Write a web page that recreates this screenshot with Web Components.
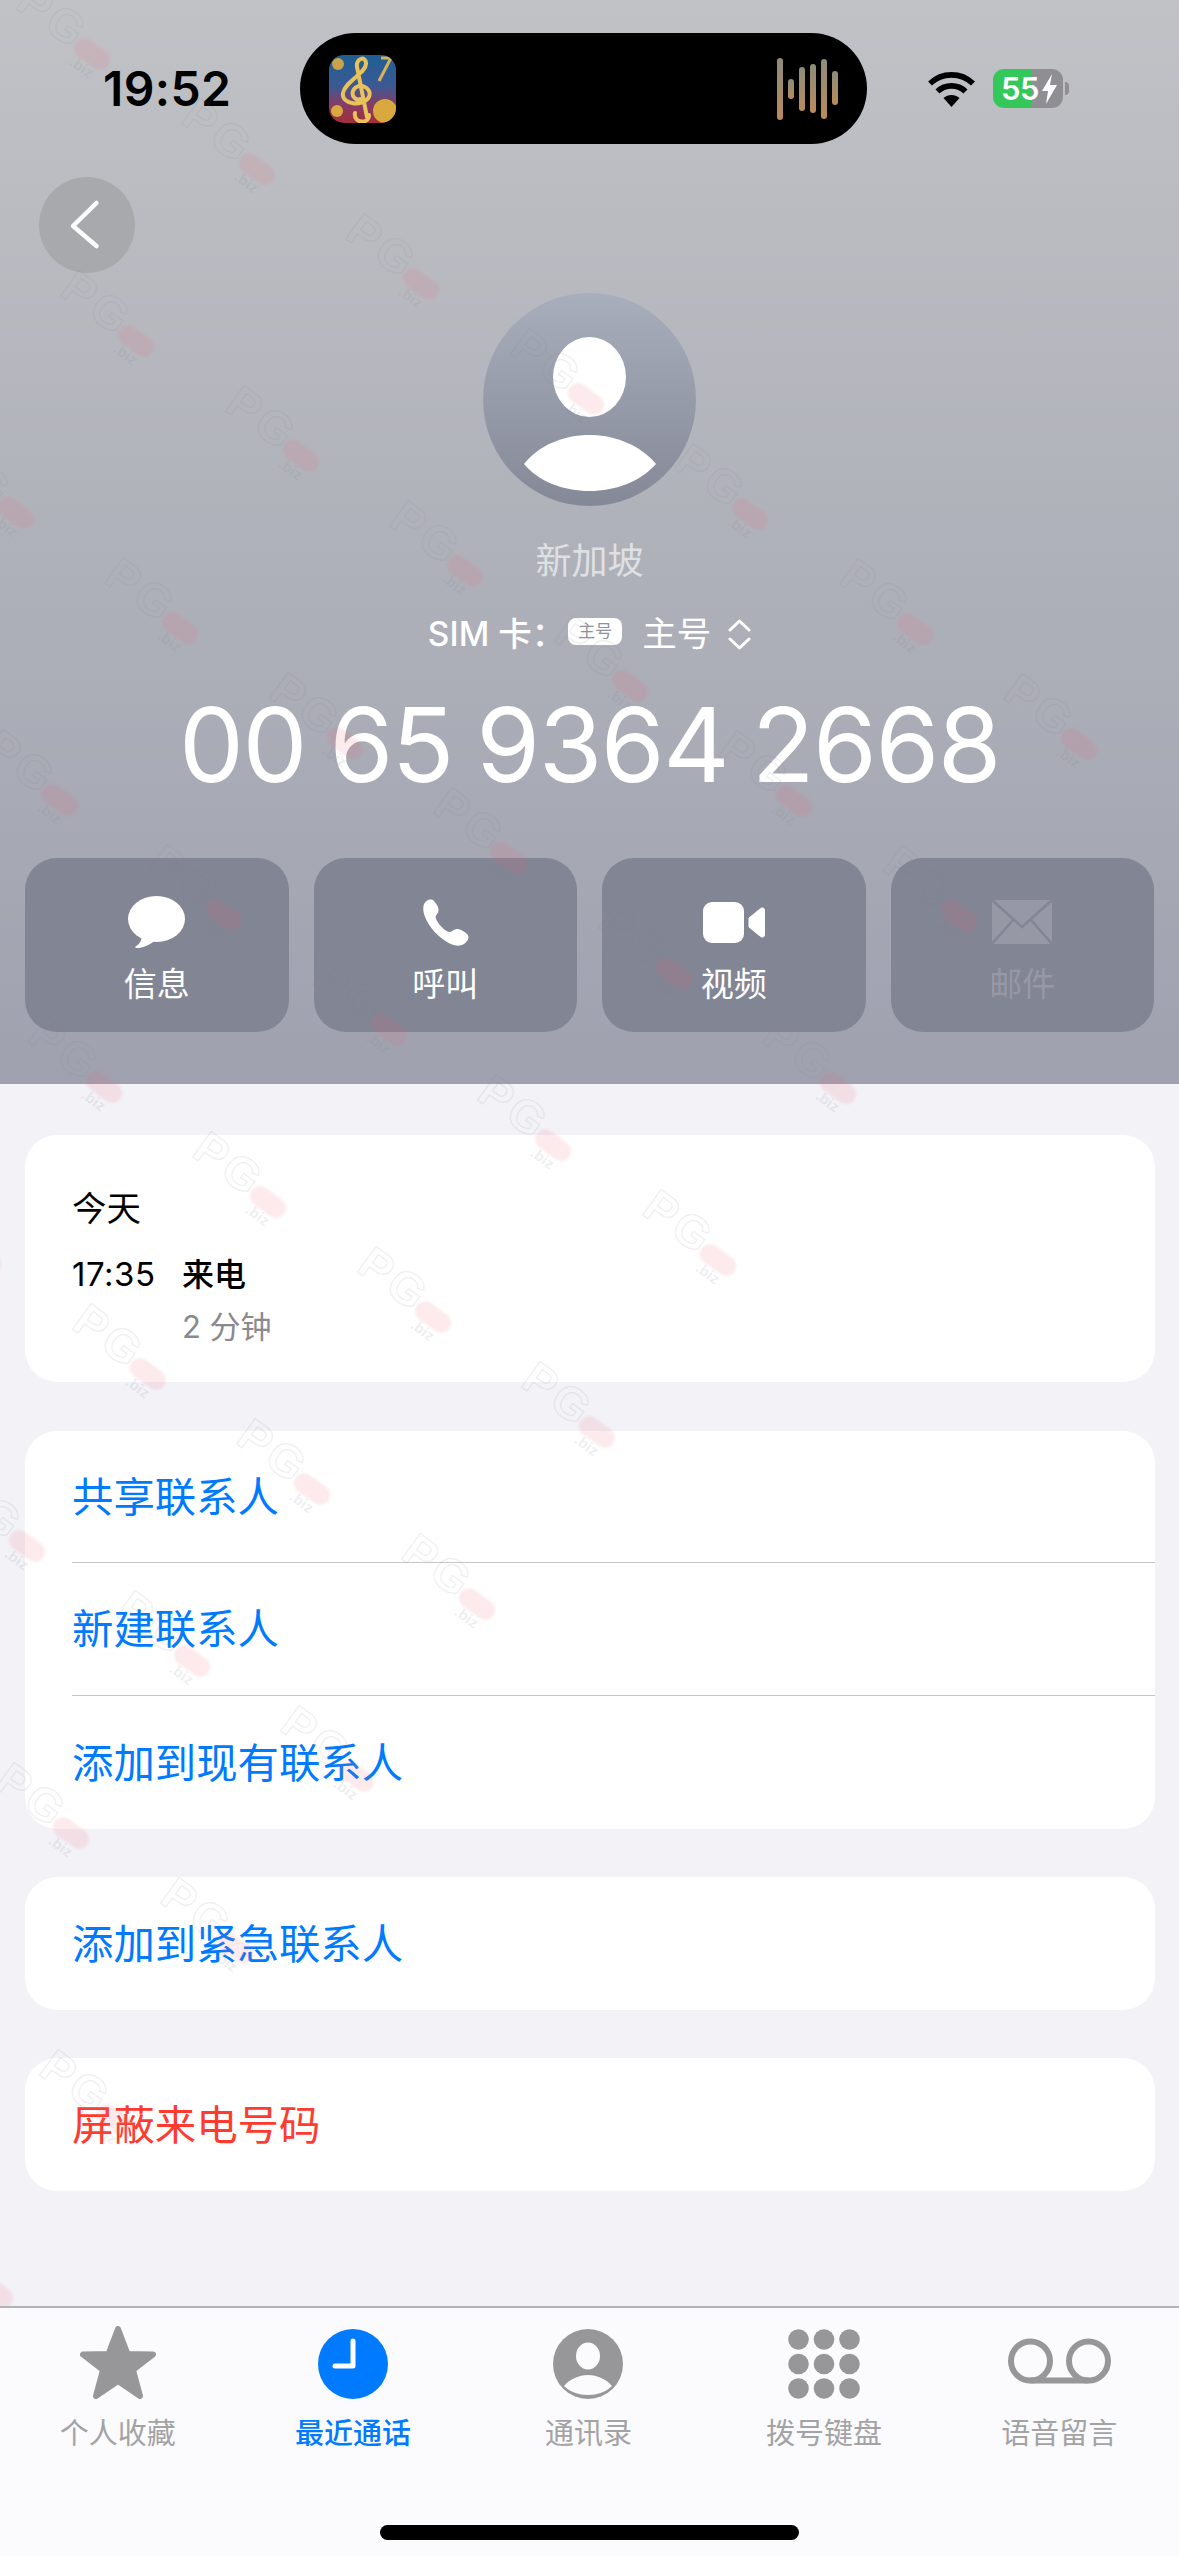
<!DOCTYPE html>
<html lang="zh">
<head>
<meta charset="utf-8">
<title>新加坡</title>
<style>
	html, body { margin: 0; padding: 0; background: #f2f2f7; }
	body { font-family: Inter, "Noto Sans CJK SC", sans-serif; }
</style>
</head>
<body>
<call-page></call-page>
<script>
const CJK = 'Inter, "Noto Sans CJK SC", sans-serif';

// Status bar with dynamic island
class StatusBar extends HTMLElement {
	constructor() {
		super();
		this.attachShadow({ mode: 'open' });
		this.shadowRoot.innerHTML = `
			<style>
				:host { display: grid; grid-template-columns: 300px 567px 1fr; height: 111px; padding-top: 33px; align-items: center; }
				.time { padding-left: 103px; font: 600 48px/1 Inter, sans-serif; letter-spacing: .4px; color: #000; }
				.island { height: 111px; border-radius: 56px; background: #000; display: flex; align-items: center; justify-content: space-between; padding: 0 29px; box-sizing: border-box; }
				.right { display: flex; align-items: center; padding-left: 60px; gap: 17px; }
				.batt { position: relative; width: 70px; height: 39px; border-radius: 11px; overflow: hidden; background: linear-gradient(90deg, #34c759 0 39px, #8e8e93 39px); color: #fff; font: 600 31px/39px Inter, sans-serif; letter-spacing: -.5px; display: flex; padding-left: 8px; box-sizing: border-box; }
				.batt svg { margin-left: 3px; align-self: center; }
				.nub { width: 4px; height: 13px; margin-left: -15px; border-radius: 0 4px 4px 0; background: #8e8e93; }
				svg { display: block; }
			</style>
			<div class="time">19:52</div>
			<div class="island">
				<svg width="67" height="68" viewBox="0 0 67 68">
					<defs>
						<linearGradient id="ic" x1="0" y1="0" x2="0" y2="1">
							<stop offset="0" stop-color="#1f5f93"/><stop offset=".45" stop-color="#3a5a94"/><stop offset=".75" stop-color="#8a3a62"/><stop offset="1" stop-color="#a12f3a"/>
						</linearGradient>
						<clipPath id="icc"><rect width="67" height="68" rx="15"/></clipPath>
					</defs>
					<g clip-path="url(#icc)">
						<rect width="67" height="68" fill="url(#ic)"/>
						<circle cx="56" cy="56" r="12" fill="#d7a93f"/>
						<circle cx="8" cy="56" r="6" fill="#d7a93f"/>
						<circle cx="9" cy="9" r="6" fill="#c9a24a"/>
						<path d="M52 3 L62 3 L50 26" fill="none" stroke="#d7b25a" stroke-width="3"/>
						<path d="M40 60 C40 70 24 68 26 58 M38 62 L28 12 C27 4 36 0 37 8 C38 18 16 26 14 38 C12 50 34 52 40 42 C44 32 28 26 24 36 C22 42 28 46 31 44" fill="none" stroke="#e8c25c" stroke-width="4" stroke-linecap="round"/>
					</g>
				</svg>
				<svg width="62" height="62" viewBox="0 0 62 62">
					<defs><linearGradient id="bar" x1="0" y1="0" x2="0" y2="1"><stop offset="0" stop-color="#8d8c7c"/><stop offset="1" stop-color="#b98a5b"/></linearGradient></defs>
					<g fill="url(#bar)">
						<rect x="1" y="0" width="6" height="62" rx="3"/>
						<rect x="12" y="21" width="6" height="20" rx="3"/>
						<rect x="23" y="9" width="6" height="44" rx="3"/>
						<rect x="34" y="6" width="6" height="49" rx="3"/>
						<rect x="45" y="1" width="6" height="60" rx="3"/>
						<rect x="56" y="13" width="6" height="34" rx="3"/>
					</g>
				</svg>
			</div>
			<div class="right">
				<svg width="49" height="36" viewBox="0 0 49 36">
					<path d="M24.5 36 L16.5 27 C21 23 28 23 32.5 27 Z"/>
					<path d="M10.5 20.5 C18 13 31 13 38.5 20.5" fill="none" stroke="#000" stroke-width="5.6"/>
					<path d="M3 12.5 C15 1 34 1 46 12.5" fill="none" stroke="#000" stroke-width="5.6"/>
				</svg>
				<div class="batt">55<svg width="15" height="30" viewBox="0 0 15 30"><path d="M10 0 L0 17 L6 17 L4 30 L15 11 L8 11 Z" fill="#fff"/></svg></div>
				<div class="nub"></div>
			</div>
		`;
	}
}

class BackButton extends HTMLElement {
	constructor() {
		super();
		this.attachShadow({ mode: 'open' });
		this.shadowRoot.innerHTML = `
			<style>
				:host { display: flex; width: 96px; height: 96px; border-radius: 50%; background: #a8a9ad; align-items: center; justify-content: center; }
			</style>
			<svg width="96" height="96" viewBox="0 0 96 96"><path d="M57.5 26 L34 49 L57.5 69" fill="none" stroke="#fff" stroke-width="4.5" stroke-linecap="round" stroke-linejoin="round"/></svg>
		`;
	}
}

class ContactAvatar extends HTMLElement {
	constructor() {
		super();
		this.attachShadow({ mode: 'open' });
		this.shadowRoot.innerHTML = `
			<style>
				:host { display: block; width: 213px; height: 213px; }
				svg { display: block; }
			</style>
			<svg width="213" height="213" viewBox="0 0 213 213">
				<defs><linearGradient id="av" x1="0" y1="0" x2="0" y2="1"><stop offset="0" stop-color="#a9aebc"/><stop offset="1" stop-color="#858997"/></linearGradient></defs>
				<circle cx="106.5" cy="106.5" r="106.5" fill="url(#av)"/>
				<ellipse cx="106.5" cy="84" rx="36.5" ry="40" fill="#fff"/>
				<path d="M41 171 C56 152 81 142 106.5 142 C132 142 157 152 173 171 C157 189 132 198 106.5 198 C81 198 56 189 41 171 Z" fill="#fff"/>
			</svg>
		`;
	}
}

// Rounded square button under the number, icon goes in the slot
class ActionButton extends HTMLElement {
	constructor() {
		super();
		this.attachShadow({ mode: 'open' });
		this.shadowRoot.innerHTML = `
			<style>
				:host { display: flex; flex-direction: column; align-items: center; height: 174px; padding-top: 36px; box-sizing: border-box; border-radius: 32px; background: #828594; color: #fff; font: 400 33px/40px ${CJK}; }
				:host([disabled]) { color: #9798a5; }
				.icon { height: 56px; display: flex; align-items: center; justify-content: center; margin-bottom: 14px; }
			</style>
			<div class="icon"><slot name="icon"></slot></div>
			<slot></slot>
		`;
	}
}

class CallHeader extends HTMLElement {
	constructor() {
		super();
		this.attachShadow({ mode: 'open' });
		this.shadowRoot.innerHTML = `
			<style>
				:host { display: flex; flex-direction: column; height: 1084px; box-sizing: border-box; background: linear-gradient(180deg, #c1c2c6 0%, #b1b3bb 45%, #9fa1af 100%); color: #fff; }
				back-button { margin: 33px 0 0 39px; }
				contact-avatar { align-self: center; margin-top: 20px; }
				.place { margin-top: 33px; text-align: center; font: 400 36px/44px ${CJK}; color: #dfe0e4; }
				.sim { margin-top: 29px; height: 44px; display: flex; justify-content: center; align-items: center; font: 400 34.5px/44px ${CJK}; }
				.sim .lbl { font-size: 33.5px; font-weight: 500; }
				.badge { margin: -6px 20px 0 3px; width: 54px; height: 27px; border-radius: 8px; background: #fff; color: #8f919d; font: 400 17px/27px ${CJK}; text-align: center; }
				.sim svg { margin-left: 17px; }
				.number { margin-top: 29px; text-align: center; font: 400 103px/120px Inter, sans-serif; letter-spacing: -1.5px; word-spacing: -4px; white-space: nowrap; }
				.actions { margin-top: 53px; padding: 0 25px; display: grid; grid-template-columns: repeat(4, 1fr); gap: 25px; }
				svg { display: block; }
			</style>
			<status-bar></status-bar>
			<back-button></back-button>
			<contact-avatar></contact-avatar>
			<div class="place">新加坡</div>
			<div class="sim">
				<span class="lbl">SIM 卡：</span><span class="badge">主号</span><span>主号</span>
				<svg width="23" height="31" viewBox="0 0 23 31"><path d="M2 11 L11.5 2 L21 11 M2 20 L11.5 29 L21 20" fill="none" stroke="#fff" stroke-width="3" stroke-linecap="round" stroke-linejoin="round"/></svg>
			</div>
			<div class="number">00 65 9364 2668</div>
			<div class="actions">
				<action-button>
					<svg slot="icon" width="57" height="52" viewBox="0 0 57 52"><ellipse cx="28.5" cy="23" rx="28.5" ry="23" fill="#fff"/><path d="M14 38 C14 44 12 48 7 51 C7 52 9 52 11 52 C17 51 23 48 28 44 Z" fill="#fff"/></svg>
					信息
				</action-button>
				<action-button>
					<svg slot="icon" width="47" height="47" viewBox="0 0 47 47"><path d="M2 5 C4 1 9 -1 12 2 L15 6 C17 9 17 13 15 15 C13 17 13 20 17 25 C21 30 25 33 28 33 C30 33 32 30 35 30 C38 30 42 32 45 35 C48 38 46 42 42 45 C37 48 30 47 22 41 C13 35 5 25 2 15 C1 11 1 8 2 5 Z" fill="#fff"/></svg>
					呼叫
				</action-button>
				<action-button>
					<svg slot="icon" width="62" height="41" viewBox="0 0 62 41"><rect width="41" height="41" rx="9" fill="#fff"/><path d="M46 16 L57 7 C59 5 62 6 62 9 L62 32 C62 35 59 36 57 34 L46 25 Z" fill="#fff" stroke="#fff" stroke-linejoin="round"/></svg>
					视频
				</action-button>
				<action-button disabled>
					<svg slot="icon" width="60" height="44" viewBox="0 0 60 44"><rect width="60" height="44" fill="#9798a5"/><path d="M0 0 L30 27 L60 0 M0 44 L21 20 M60 44 L39 20" fill="none" stroke="#828594" stroke-width="2.5"/></svg>
					邮件
				</action-button>
			</div>
		`;
	}
}

class CallLogCard extends HTMLElement {
	constructor() {
		super();
		this.attachShadow({ mode: 'open' });
		this.shadowRoot.innerHTML = `
			<style>
				:host { display: block; height: 247px; box-sizing: border-box; padding: 52px 47px 0; background: #fff; border-radius: 32px; color: #000; margin-bottom: 1px; }
				.day { font: 400 34.5px/44px ${CJK}; }
				.row { margin-top: 21px; display: grid; grid-template-columns: 110px 1fr; }
				.time { font: 400 33px/44px Inter, sans-serif; letter-spacing: .5px; }
				.kind { font: 500 32px/44px ${CJK}; margin-top: 1px; }
				.dur { grid-column: 2; margin-top: 8px; font: 400 31px/44px ${CJK}; color: #8a8a8e; }
			</style>
			<div class="day">今天</div>
			<div class="row">
				<div class="time">17:35</div>
				<div class="kind">来电</div>
				<div class="dur">2 分钟</div>
			</div>
		`;
	}
}

class ActionGroup extends HTMLElement {
	constructor() {
		super();
		this.attachShadow({ mode: 'open' });
		this.shadowRoot.innerHTML = `
			<style>
				:host { display: flex; flex-direction: column; background: #fff; border-radius: 32px; overflow: hidden; }
			</style>
			<slot></slot>
		`;
	}
}

class ActionRow extends HTMLElement {
	constructor() {
		super();
		this.attachShadow({ mode: 'open' });
		this.shadowRoot.innerHTML = `
			<style>
				:host { display: block; color: #007aff; font: 400 41.4px/1 ${CJK}; padding-left: 47px; }
				:host([danger]) { color: #ff3b30; }
				.in { height: 133px; display: flex; align-items: center; box-sizing: border-box; padding-top: 1.5px; }
				:host(:first-child:not(:last-child)) .in { height: 132px; }
				:host(:not(:last-child)) .in { border-bottom: 1.5px solid #c6c6c8; }
			</style>
			<div class="in"><slot></slot></div>
		`;
	}
}

class TabItem extends HTMLElement {
	constructor() {
		super();
		this.attachShadow({ mode: 'open' });
		this.shadowRoot.innerHTML = `
			<style>
				:host { display: flex; flex-direction: column; align-items: center; color: #a3a3a5; font: 400 29px/36px ${CJK}; }
				:host([active]) { color: #007aff; font-weight: 500; }
				.icon { height: 75px; display: flex; align-items: flex-end; justify-content: center; margin-bottom: 17px; }
			</style>
			<div class="icon"><slot name="icon"></slot></div>
			<slot></slot>
		`;
	}
}

class TabBar extends HTMLElement {
	constructor() {
		super();
		this.attachShadow({ mode: 'open' });
		this.shadowRoot.innerHTML = `
			<style>
				:host { display: block; height: 250px; box-sizing: border-box; background: #fbfbfd; border-top: 2px solid #b3b3b5; }
				.tabs { display: grid; grid-template-columns: repeat(5, 1fr); padding: 16px 2px 0 0; }
				.home { width: 419px; height: 15px; margin: 73px auto 0; border-radius: 8px; background: #000; }
				svg { display: block; }
			</style>
			<div class="tabs">
				<tab-item>
					<svg slot="icon" width="76" height="73" viewBox="0 0 76 73"><path d="M38 3 L47.5 28 L73 28.5 L53 44 L60 70 L38 55 L16 70 L23 44 L3 28.5 L28.5 28 Z" fill="#979799" stroke="#979799" stroke-width="6" stroke-linejoin="round"/></svg>
					个人收藏
				</tab-item>
				<tab-item active>
					<svg slot="icon" width="70" height="70" viewBox="0 0 70 70"><circle cx="35" cy="35" r="35" fill="#007aff"/><path d="M35 12 L35 37 L17 37" fill="none" stroke="#fff" stroke-width="5" stroke-linecap="round" stroke-linejoin="round"/></svg>
					最近通话
				</tab-item>
				<tab-item>
					<svg slot="icon" width="70" height="70" viewBox="0 0 70 70"><circle cx="35" cy="35" r="35" fill="#979799"/><ellipse cx="35" cy="27" rx="12" ry="13.5" fill="#fbfbfd"/><path d="M11 57 C17 50 26 46 35 46 C44 46 53 50 59 57 C53 63 44 66 35 66 C26 66 17 63 11 57 Z" fill="#fbfbfd"/></svg>
					通讯录
				</tab-item>
				<tab-item>
					<svg slot="icon" width="72" height="70" viewBox="0 0 72 70" fill="#979799">
						<circle cx="10.5" cy="10.5" r="10.3"/><circle cx="36" cy="10.5" r="10.3"/><circle cx="61.5" cy="10.5" r="10.3"/>
						<circle cx="10.5" cy="35" r="10.3"/><circle cx="36" cy="35" r="10.3"/><circle cx="61.5" cy="35" r="10.3"/>
						<circle cx="10.5" cy="59.5" r="10.3"/><circle cx="36" cy="59.5" r="10.3"/><circle cx="61.5" cy="59.5" r="10.3"/>
					</svg>
					拨号键盘
				</tab-item>
				<tab-item>
					<svg slot="icon" width="103" height="70" viewBox="0 0 103 70"><g fill="none" stroke="#979799" stroke-width="6"><circle cx="22.5" cy="32" r="19.5"/><circle cx="80.5" cy="32" r="19.5"/><path d="M22.5 51.5 L80.5 51.5"/></g></svg>
					语音留言
				</tab-item>
			</div>
			<div class="home"></div>
		`;
	}
}

// Diagonal stock-photo mark repeated over the screen, sits over everything except the tab bar
class WatermarkLayer extends HTMLElement {
	constructor() {
		super();
		this.attachShadow({ mode: 'open' });
		let marks = '';
		// seven marks per row, each row starts one step further down-left
		for (let j = 0; j < 10; j++) {
			for (let i = -j; i <= 6 - j; i++) {
				const x = 92 + i * 164.5 + j * 44;
				const y = 54 + i * 115 + j * 287;
				if (x < -20 || x > 1270 || y < -40 || y > 2340) continue;
				marks += `<div class="mark" style="left:${x}px;top:${y}px"><span class="pg">PG</span><span class="biz">.biz</span><i></i></div>`;
			}
		}
		this.shadowRoot.innerHTML = `
			<style>
				:host { display: block; position: absolute; left: 0; top: 0; width: 1179px; height: 2306px; overflow: hidden; pointer-events: none; }
				.mark { position: absolute; width: 0; height: 0; transform: rotate(36deg); }
				i { position: absolute; left: -20px; top: -10px; width: 40px; height: 20px; border-radius: 10px; background: rgba(236, 90, 105, .13); filter: blur(.8px); }
				.pg { position: absolute; right: 16px; top: -28px; font: 700 46px/40px "Liberation Sans", sans-serif; letter-spacing: 4px; color: transparent; -webkit-text-stroke: 1.5px rgba(130, 130, 140, .12); white-space: nowrap; }
				.biz { position: absolute; left: -13px; top: 9px; font: 700 15px/16px "Liberation Sans", sans-serif; color: rgba(130, 130, 140, .15); }
			</style>
			${marks}
		`;
	}
}

class CallPage extends HTMLElement {
	constructor() {
		super();
		this.attachShadow({ mode: 'open' });
		this.shadowRoot.innerHTML = `
			<style>
				:host { display: flex; flex-direction: column; position: relative; width: 1179px; height: 2556px; overflow: hidden; background: #f2f2f7; }
				.body { flex: 1; display: flex; flex-direction: column; gap: 48px; padding: 51px 24px 0 25px; }
			</style>
			<call-header></call-header>
			<div class="body">
				<call-log-card></call-log-card>
				<action-group>
					<action-row>共享联系人</action-row>
					<action-row>新建联系人</action-row>
					<action-row>添加到现有联系人</action-row>
				</action-group>
				<action-group><action-row>添加到紧急联系人</action-row></action-group>
				<action-group><action-row danger>屏蔽来电号码</action-row></action-group>
			</div>
			<tab-bar></tab-bar>
			<watermark-layer></watermark-layer>
		`;
	}
}

customElements.define('status-bar', StatusBar);
customElements.define('back-button', BackButton);
customElements.define('contact-avatar', ContactAvatar);
customElements.define('action-button', ActionButton);
customElements.define('call-header', CallHeader);
customElements.define('call-log-card', CallLogCard);
customElements.define('action-group', ActionGroup);
customElements.define('action-row', ActionRow);
customElements.define('tab-item', TabItem);
customElements.define('tab-bar', TabBar);
customElements.define('watermark-layer', WatermarkLayer);
customElements.define('call-page', CallPage);
</script>
</body>
</html>
